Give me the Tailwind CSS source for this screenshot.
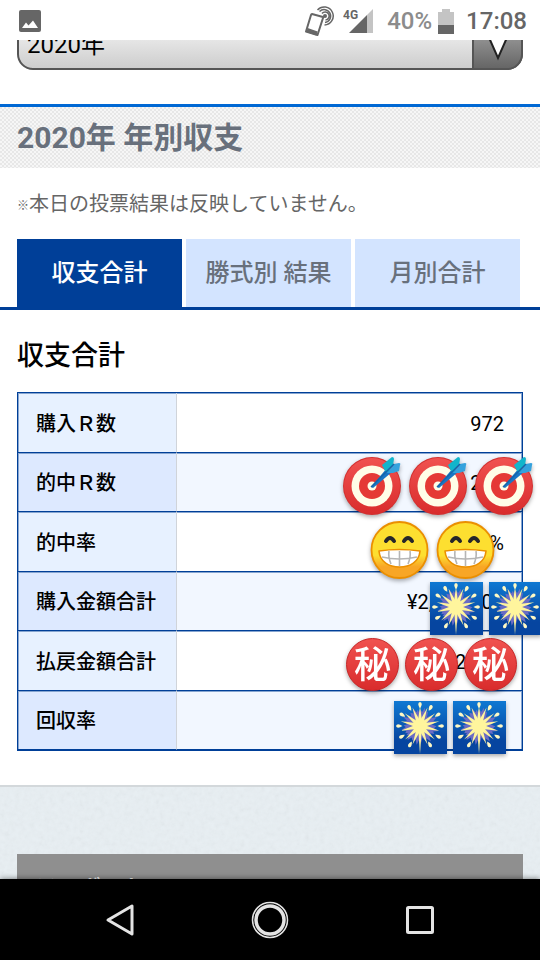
<!DOCTYPE html>
<html lang="ja">
<head>
    <meta charset="UTF-8">
    <meta name="viewport" content="width=device-width, initial-scale=1.0">
    <title>2020年 年別収支</title>
    <script src="https://cdn.jsdelivr.net/npm/@tailwindcss/browser@4"></script>
</head>
<body class="flex h-screen flex-col overflow-hidden bg-white font-['Roboto','Noto_Sans_CJK_JP',sans-serif] text-black">

    <!-- Shared drawings -->
    <svg class="absolute size-0" aria-hidden="true">
        <defs>
            <linearGradient id="red" x1="0" y1="0" x2="0" y2="1">
                <stop offset="0" stop-color="#f05250"/><stop offset="1" stop-color="#d92c2c"/>
            </linearGradient>
            <linearGradient id="sky" x1="0" y1="0" x2="0" y2="1">
                <stop offset="0" stop-color="#0f78d2"/><stop offset=".75" stop-color="#0645a0"/>
            </linearGradient>
            <linearGradient id="face" x1="0" y1="0" x2="0" y2="1">
                <stop offset=".6" stop-color="#fddf30"/><stop offset=".8" stop-color="#f8a626"/>
            </linearGradient>
            <symbol id="target" viewBox="0 0 60 60">
                <circle cx="30" cy="30" r="29" fill="#d32f2f"/>
                <circle cx="30" cy="30" r="28" fill="url(#red)"/>
                <circle cx="30" cy="30" r="20.500" fill="#fffde7"/>
                <circle cx="30" cy="30" r="13" fill="#e53935"/>
                <circle cx="30" cy="30" r="4.500" fill="#fffde7"/>
                <path d="M29 31L45 12L50 16L31 32Z" fill="#1976c5"/>
                <path d="M43 15L40 9L50 1Q52 1 52 3L51 9L46 16Z" fill="#12b5cb"/>
                <path d="M46 16L52 8L57 7Q59 7 58 9L57 15L51 17L44 17Z" fill="#35a2dd"/>
                <path d="M29 31L52 8" stroke="#1565a8" stroke-width="1.500"/>
            </symbol>
            <symbol id="grin" viewBox="0 0 60 60">
                <circle cx="29.500" cy="30" r="28" fill="url(#face)" stroke="#eb8f00" stroke-width="1.800"/>
                <path d="M16 21Q20 15 24 21M34 21Q38 15 42 21" fill="none" stroke="#26262a" stroke-width="4" stroke-linecap="round"/>
                <path d="M9 31Q29 28 50 31C49 42 40 47 29.500 47S10 42 9 31Z" fill="#fff" stroke="#eb8f00" stroke-width="1.600" stroke-linejoin="round"/>
                <path d="M12 37Q29 41 47 37M29.500 31V46M19 31Q18 37 21 44M40 31Q41 37 38 44" fill="none" stroke="#b5b5b5" stroke-width="1.600"/>
            </symbol>
            <path id="ray" d="M23.300 25L26 5L28.700 25Z"/>
            <path id="ray-short" d="M20.500 25L22 9L24.500 11L26 6L28 11L30 9L31.500 25Z"/>
            <path id="drop" d="M26 7.500Q22.500 2 26 1Q29.500 2 26 7.500Z"/>
            <symbol id="firework" viewBox="0 0 53 53">
                <rect width="53" height="53" fill="url(#sky)"/>
                <g fill="#6a6cc4">
                    <use href="#ray-short" transform="rotate(15 26 25)"/><use href="#ray-short" transform="rotate(62 26 25)"/>
                    <use href="#ray-short" transform="rotate(105 26 25)"/><use href="#ray-short" transform="rotate(145 26 25)"/>
                    <use href="#ray-short" transform="rotate(190 26 25)"/><use href="#ray-short" transform="rotate(222 26 25)"/>
                    <use href="#ray-short" transform="rotate(258 26 25)"/><use href="#ray-short" transform="rotate(298 26 25)"/>
                    <use href="#ray-short" transform="rotate(338 26 25)"/>
                </g>
                <g fill="#fff59d">
                    <use href="#ray"/><use href="#ray" transform="rotate(22 26 25)"/><use href="#ray" transform="rotate(50 26 25)"/>
                    <use href="#ray" transform="rotate(76 26 25)"/><use href="#ray" transform="rotate(104 26 25)"/><use href="#ray" transform="rotate(132 26 25)"/>
                    <use href="#ray" transform="rotate(158 26 25)"/><use href="#ray" transform="rotate(202 26 25)"/><use href="#ray" transform="rotate(228 26 25)"/>
                    <use href="#ray" transform="rotate(256 26 25)"/><use href="#ray" transform="rotate(284 26 25)"/><use href="#ray" transform="rotate(310 26 25)"/>
                    <use href="#ray" transform="rotate(338 26 25)"/>
                    <path d="M24 25L26 53L28 25Z"/>
                    <circle cx="26" cy="25" r="5.500"/>
                </g>
                <g fill="#fff9c4">
                    <use href="#drop"/><use href="#drop" transform="rotate(30 26 25)"/><use href="#drop" transform="rotate(58 26 25)"/>
                    <use href="#drop" transform="rotate(90 26 25)"/><use href="#drop" transform="rotate(120 26 25)"/><use href="#drop" transform="rotate(152 26 25)"/>
                    <use href="#drop" transform="rotate(208 26 25)"/><use href="#drop" transform="rotate(240 26 25)"/><use href="#drop" transform="rotate(270 26 25)"/>
                    <use href="#drop" transform="rotate(302 26 25)"/><use href="#drop" transform="rotate(330 26 25)"/>
                </g>
            </symbol>
            <symbol id="secret" viewBox="0 0 53 53">
                <circle cx="26.500" cy="26.500" r="26" fill="url(#red)" stroke="#c62828" stroke-width="1"/>
                <text x="26.500" y="40" text-anchor="middle" font-size="37" font-weight="500" fill="#fff" font-family="Noto Sans CJK JP, sans-serif">秘</text>
            </symbol>
        </defs>
    </svg>

    <!-- Status bar -->
    <header class="z-10 flex h-10 shrink-0 items-center bg-white pt-0.5 pr-[13px] pl-[19px] text-2xl font-medium text-[#666]">
        <svg class="mr-auto size-[22px]" viewBox="0 0 22 22">
            <rect width="22" height="22" rx="2" fill="#666"/>
            <path d="M3 18L7 12.500L9.500 15.500L14 10.500L19 18Z" fill="#fff"/>
        </svg>
        <svg class="mr-2 h-[30px] w-[30px]" viewBox="0 0 30 30" fill="none" stroke="#666">
            <path d="M7 8L18 11Q18.500 11 18 12L12.500 29L1 25.500L6 9Q6.300 8 7 8Z" stroke-width="2" stroke-linejoin="round"/>
            <path d="M2 24L12 27.500" stroke-width="4"/>
            <circle cx="20" cy="10" r="2" fill="#666" stroke="none"/>
            <path d="M17 7.500A4 4 0 1 1 20.500 14M14.500 5.500A6.500 6.500 0 1 1 20 16.500M12.500 4A9 9 0 1 1 19.500 19" stroke-width="1.500"/>
        </svg>
        <svg class="mr-3.5 h-6 w-[30px]" viewBox="0 0 30 24">
            <path d="M6 24L24 6V24Z" fill="#666"/>
            <path d="M24 6L30 0V24H24Z" fill="#c4c4c4"/>
            <text x="0" y="10" font-family="Roboto" font-size="12" font-weight="700" fill="#666">4G</text>
        </svg>
        <span class="mr-1.5 text-[#8c8c8c]">40%</span>
        <svg class="mr-3 h-[25px] w-4" viewBox="0 0 16 25">
            <path d="M4 0H12V3H16V25H0V3H4Z" fill="#c4c4c4"/>
            <path d="M0 16H16V25H0Z" fill="#666"/>
        </svg>
        <span>17:08</span>
    </header>

    <main class="min-h-0 flex-1 overflow-hidden">
        <!-- Year picker -->
        <div class="relative mx-[17px] -mt-5 mb-[34px]">
            <select aria-label="年" class="block h-[50px] w-full appearance-none rounded-2xl border-2 border-[#555] bg-linear-to-b from-[#f6f6f6] to-[#cdcdcd] px-2 text-2xl">
                <option>2020年</option>
            </select>
            <span class="pointer-events-none absolute top-0 right-0 flex h-full w-[51px] items-center justify-center rounded-r-2xl border-2 border-[#555] bg-linear-to-b from-[#aaa] to-[#666]">
                <svg class="h-8 w-6" viewBox="0 0 24 32">
                    <path d="M1 4L12 29L23 4Z" fill="#fff"/>
                    <path d="M1 4L12 29L23 4" fill="none" stroke="#222" stroke-width="2"/>
                </svg>
            </span>
        </div>

        <h1 class="border-t-[3px] border-[#0068d4] bg-[#f2f2f2] bg-[conic-gradient(#f6f6f6_25%,#e7e7e7_0_50%,#f6f6f6_0_75%,#e7e7e7_0)] bg-[length:4px_4px] px-[17px] text-3xl leading-[61px] font-bold text-[#68707c]">2020年 年別収支</h1>
        <p class="px-[17px] pt-[21px] pb-[19px] text-xl leading-[31px] text-[#666]"><span class="align-middle text-xs leading-none">※</span>本日の投票結果は反映していません。</p>

        <!-- Tabs -->
        <nav class="grid grid-cols-3 gap-1 border-b-[3px] border-[#003f98] pr-5 pl-[17px] text-center text-2xl leading-[68px] font-medium text-[#68707c]">
            <a href="#total" class="bg-[#003f98] text-white">収支合計</a>
            <a href="#type" class="bg-[#d3e4ff]">勝式別 結果</a>
            <a href="#month" class="bg-[#d3e4ff]">月別合計</a>
        </nav>

        <section id="total" class="px-[17px] pt-[25px] pb-[34px]">
            <h2 class="mb-[15px] text-[27px] leading-[42px] font-medium">収支合計</h2>
            <table class="h-[359px] w-full table-fixed border-separate border-spacing-0 border border-[#003f98] text-xl [&_td]:relative [&_td]:border-b [&_td]:border-l [&_td]:border-b-[#003f98] [&_td]:border-l-[#d0d4da] [&_td]:pt-[3px] [&_td]:pr-[18px] [&_td]:text-right [&_td]:shadow-[inset_-1px_1px_0_#86a5d0] [&_th]:border-b [&_th]:border-[#003f98] [&_th]:pt-[3px] [&_th]:pl-[18px] [&_th]:text-left [&_th]:font-medium [&_th]:shadow-[inset_1px_1px_0_#86a5d0]">
                <tbody>
                    <tr>
                        <th scope="row" class="w-[158px] bg-[#e7f1ff]">購入Ｒ数</th>
                        <td>972</td>
                    </tr>
                    <tr>
                        <th scope="row" class="bg-[#dde9ff]">的中Ｒ数</th>
                        <td class="bg-[#f2f7ff]">222
                            <span class="absolute top-[3px] -right-3 z-10 flex gap-1.5 drop-shadow-[0_2px_2px_#0005]">
                                <svg class="size-[60px]"><use href="#target"/></svg>
                                <svg class="size-[60px]"><use href="#target"/></svg>
                                <svg class="size-[60px]"><use href="#target"/></svg>
                            </span>
                        </td>
                    </tr>
                    <tr>
                        <th scope="row" class="bg-[#e7f1ff]">的中率</th>
                        <td>22.2%
                            <span class="absolute top-2 right-[26px] z-10 flex gap-1.5 drop-shadow-[0_2px_2px_#0005]">
                                <svg class="size-[60px]"><use href="#grin"/></svg>
                                <svg class="size-[60px]"><use href="#grin"/></svg>
                            </span>
                        </td>
                    </tr>
                    <tr>
                        <th scope="row" class="bg-[#dde9ff]">購入金額合計</th>
                        <td class="bg-[#f2f7ff]">¥2,000,000
                            <span class="absolute top-2.5 -right-5 z-10 flex gap-1.5 drop-shadow-[0_2px_2px_#0005]">
                                <svg class="size-[53px]"><use href="#firework"/></svg>
                                <svg class="size-[53px]"><use href="#firework"/></svg>
                            </span>
                        </td>
                    </tr>
                    <tr>
                        <th scope="row" class="bg-[#e7f1ff]">払戻金額合計</th>
                        <td>¥2,002,000
                            <span class="absolute top-[7px] right-[5px] z-10 flex gap-1.5 drop-shadow-[0_2px_2px_#0005]">
                                <svg class="size-[53px]"><use href="#secret"/></svg>
                                <svg class="size-[53px]"><use href="#secret"/></svg>
                                <svg class="size-[53px]"><use href="#secret"/></svg>
                            </span>
                        </td>
                    </tr>
                    <tr>
                        <th scope="row" class="bg-[#dde9ff]">回収率</th>
                        <td class="bg-[#f2f7ff]">90%
                            <span class="absolute top-2.5 right-4 z-10 flex gap-1.5 drop-shadow-[0_2px_2px_#0005]">
                                <svg class="size-[53px]"><use href="#firework"/></svg>
                                <svg class="size-[53px]"><use href="#firework"/></svg>
                            </span>
                        </td>
                    </tr>
                </tbody>
            </table>
        </section>

        <footer class="relative border-t-2 border-[#d3d8db] bg-[#e8eff3] px-[17px] pt-[67px]">
            <svg class="absolute inset-0 h-full w-full opacity-10">
                <filter id="paper"><feTurbulence type="fractalNoise" baseFrequency=".2" numOctaves="3"/><feColorMatrix type="saturate" values="0"/></filter>
                <rect width="100%" height="100%" filter="url(#paper)"/>
            </svg>
            <a href="#" class="relative block bg-[#8f8f8f] px-[18px] pt-[18px] text-[22px] leading-8 font-medium text-white">テレボート</a>
        </footer>
    </main>

    <!-- System navigation -->
    <nav class="relative z-10 flex h-[81px] shrink-0 items-center justify-center gap-[110px] bg-black shadow-[0_0_6px_#0008]">
        <button aria-label="戻る"><svg class="size-10" viewBox="0 0 40 40"><path d="M8 20L32 6V34Z" fill="none" stroke="#e4e4e4" stroke-width="3" stroke-linejoin="round"/></svg></button>
        <button aria-label="ホーム"><svg class="size-10" viewBox="0 0 40 40" fill="none" stroke="#e4e4e4"><circle cx="20" cy="20" r="17.500" stroke-width="1.500"/><circle cx="20" cy="20" r="14" stroke-width="3.500"/></svg></button>
        <button aria-label="履歴"><svg class="size-10" viewBox="0 0 40 40"><rect x="7.500" y="7.500" width="25" height="25" rx="1" fill="none" stroke="#e4e4e4" stroke-width="3"/></svg></button>
    </nav>
</body>
</html>
